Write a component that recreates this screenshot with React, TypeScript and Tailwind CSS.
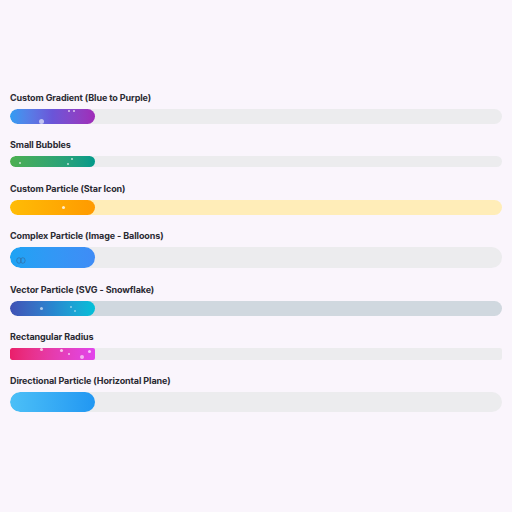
import React from 'react';

type Dot = { x: number; y: number; s: number; o?: number };

interface BarProps {
  label: string;
  height: number;
  fill: string;
  track: string;
  radius: string;
  dots?: Dot[];
  icon?: React.ReactNode;
}

function Bar({ label, height, fill, track, radius, dots = [], icon }: BarProps) {
  return (
    <div className="flex flex-col">
      <div className="h-[12px] text-[9px] leading-[12px] font-bold text-[#2a2a33] tracking-[-0.1px]">
        {label}
      </div>
      <div className={`mt-[5px] w-full ${track} ${radius} relative overflow-hidden`} style={{ height }}>
        <div className={`h-full w-[85px] ${fill} ${radius} relative`}>
          {dots.map((d, i) => (
            <span
              key={i}
              className="absolute rounded-full bg-white"
              style={{ left: d.x, top: d.y, width: d.s, height: d.s, opacity: d.o ?? 0.7 }}
            />
          ))}
          {icon}
        </div>
      </div>
    </div>
  );
}

export default function App() {
  return (
    <div
      className="min-h-[512px] w-[512px] bg-[#faf5fc] px-[10px] pt-[92px] flex flex-col gap-[15.4px]"
      style={{ fontFamily: 'Inter, "Noto Sans", sans-serif' }}
    >
      <Bar
        label="Custom Gradient (Blue to Purple)"
        height={15}
        track="bg-[#ececee]"
        radius="rounded-full"
        fill="bg-gradient-to-r from-[#2f9cf2] via-[#6a55d8] to-[#a02ab8]"
        dots={[
          { x: 29, y: 10, s: 5, o: 0.6 },
          { x: 58, y: 1, s: 2 },
          { x: 63, y: 1, s: 2 },
        ]}
      />
      <Bar
        label="Small Bubbles"
        height={11}
        track="bg-[#ececee]"
        radius="rounded-full"
        fill="bg-gradient-to-r from-[#4caf50] to-[#009a8a]"
        dots={[
          { x: 9, y: 6, s: 2 },
          { x: 57, y: 7, s: 2 },
          { x: 61, y: 2, s: 1.5 },
        ]}
      />
      <Bar
        label="Custom Particle (Star Icon)"
        height={15}
        track="bg-[#ffedb8]"
        radius="rounded-full"
        fill="bg-gradient-to-r from-[#ffbc06] to-[#ff9a00]"
        dots={[{ x: 52, y: 6, s: 3, o: 0.8 }]}
      />
      <Bar
        label="Complex Particle (Image - Balloons)"
        height={21}
        track="bg-[#ececee]"
        radius="rounded-full"
        fill="bg-gradient-to-r from-[#1da3f4] to-[#3f8cf6]"
        icon={
          <svg className="absolute left-[6px] top-[10px]" width="10" height="8" viewBox="0 0 10 8" fill="none">
            <ellipse cx="3" cy="3.5" rx="2.3" ry="2.8" stroke="#3a5a80" strokeWidth="0.8" opacity="0.6" />
            <ellipse cx="6.8" cy="3.5" rx="2.3" ry="2.8" stroke="#3a5a80" strokeWidth="0.8" opacity="0.6" />
          </svg>
        }
      />
      <Bar
        label="Vector Particle (SVG - Snowflake)"
        height={15}
        track="bg-[#d0d8df]"
        radius="rounded-full"
        fill="bg-gradient-to-r from-[#3f51b5] via-[#2786cf] to-[#00c0d8]"
        dots={[
          { x: 30, y: 6, s: 3, o: 0.6 },
          { x: 60, y: 5, s: 2, o: 0.5 },
          { x: 64, y: 9, s: 2, o: 0.5 },
        ]}
      />
      <Bar
        label="Rectangular Radius"
        height={12}
        track="bg-[#ececee]"
        radius="rounded-[2px]"
        fill="bg-gradient-to-r from-[#ea1e6a] to-[#e244ec]"
        dots={[
          { x: 30, y: 0, s: 3 },
          { x: 50, y: 1, s: 3 },
          { x: 58, y: 5, s: 2 },
          { x: 70, y: 7, s: 4, o: 0.6 },
          { x: 78, y: 2, s: 3 },
        ]}
      />
      <Bar
        label="Directional Particle (Horizontal Plane)"
        height={20}
        track="bg-[#ececee]"
        radius="rounded-full"
        fill="bg-gradient-to-r from-[#4cc0f7] to-[#2197f2]"
      />
    </div>
  );
}
